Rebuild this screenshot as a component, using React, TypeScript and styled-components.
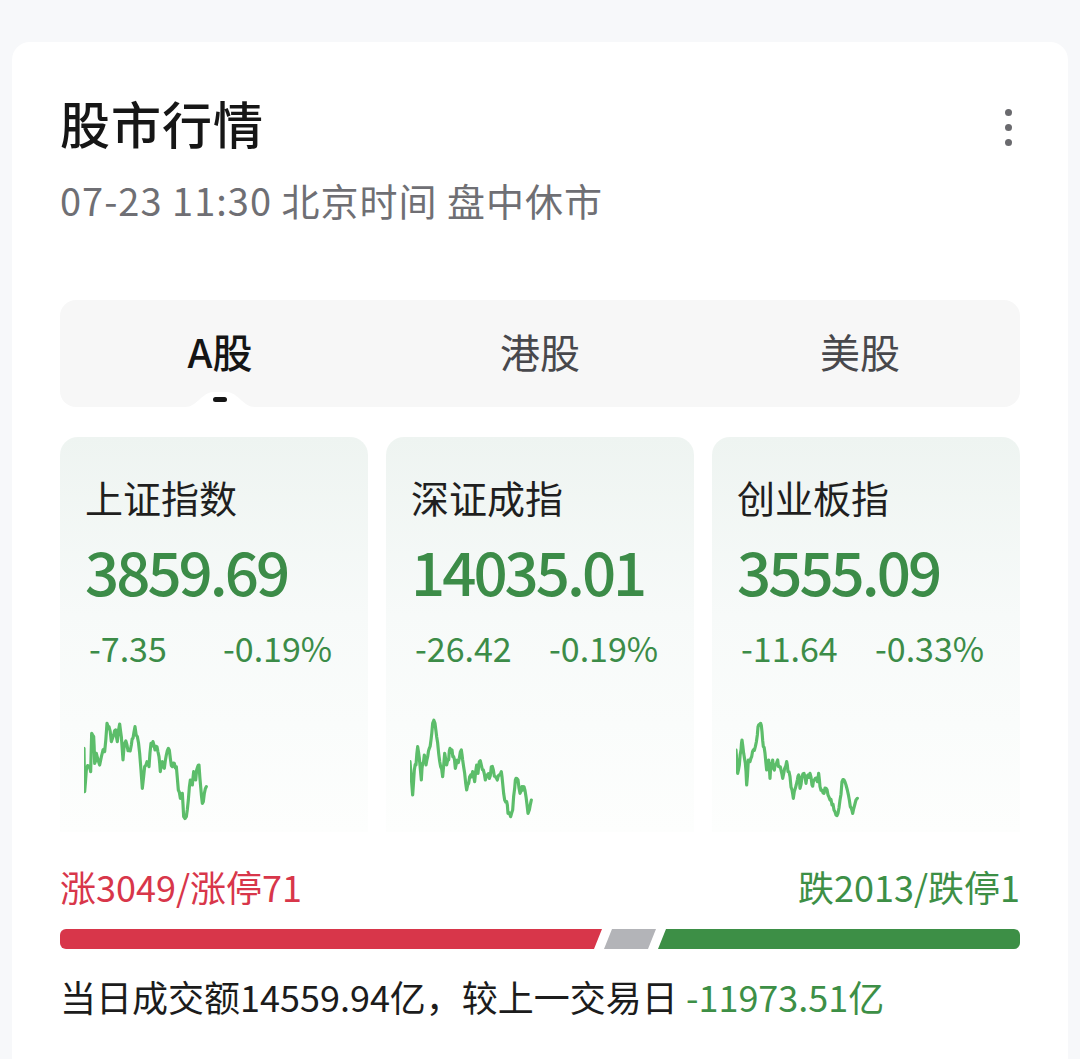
import styled, { createGlobalStyle } from 'styled-components';

const GlobalStyle = createGlobalStyle`
  body {
    margin: 0;
    background: #f7f8fa;
    font-family: 'Noto Sans CJK SC', 'Noto Sans', sans-serif;
  }
`;

type Index = {
  name: string;
  value: string;
  change: string;
  percent: string;
  start: number;
  points: number[][];
};

// traced by eye from the intraday charts, coords are in a 3x grid
const indices: Index[] = [
  {
    name: '上证指数',
    value: '3859.69',
    change: '-7.35',
    percent: '-0.19%',
    start: 43,
    points: [
      [43, 145], [45, 275], [50, 210], [58, 200], [63, 215], [66, 100], [72, 110], [75, 190],
      [80, 160], [90, 195], [100, 150], [105, 155], [112, 70], [118, 80], [125, 125], [132, 105],
      [138, 90], [143, 125], [150, 72], [155, 110], [160, 180], [165, 130], [172, 135], [178, 150],
      [185, 135], [190, 115], [196, 80], [203, 110], [210, 160], [218, 265], [225, 200], [232, 185],
      [238, 200], [244, 130], [250, 125], [256, 150], [262, 140], [268, 170], [272, 215], [278, 185],
      [284, 205], [290, 165], [296, 145], [302, 175], [308, 200], [314, 190], [320, 200], [326, 270],
      [332, 295], [338, 280], [342, 350], [350, 350], [356, 300], [362, 240], [368, 255], [372, 215],
      [378, 240], [384, 200], [388, 195], [393, 260], [398, 310], [404, 280], [410, 260],
    ],
  },
  {
    name: '深证成指',
    value: '14035.01',
    change: '-26.42',
    percent: '-0.19%',
    start: 32,
    points: [
      [32, 185], [40, 285], [45, 210], [50, 195], [55, 140], [60, 175], [66, 240], [70, 190],
      [75, 165], [80, 195], [85, 170], [90, 145], [95, 120], [100, 70], [107, 70], [112, 110],
      [118, 160], [124, 200], [130, 230], [136, 160], [142, 195], [148, 180], [152, 145], [158, 150],
      [163, 170], [168, 205], [174, 180], [180, 175], [186, 150], [190, 180], [196, 220], [202, 270],
      [208, 250], [214, 225], [220, 215], [226, 245], [232, 195], [236, 220], [240, 185], [246, 195],
      [252, 210], [258, 240], [264, 225], [270, 235], [276, 200], [282, 210], [288, 230], [294, 240],
      [300, 225], [306, 215], [310, 250], [316, 300], [322, 305], [326, 340], [334, 350], [340, 330],
      [346, 265], [350, 235], [356, 240], [362, 280], [368, 260], [374, 260], [380, 290], [386, 340],
      [390, 330], [396, 300],
    ],
  },
  {
    name: '创业板指',
    value: '3555.09',
    change: '-11.64',
    percent: '-0.33%',
    start: 50,
    points: [
      [50, 150], [55, 220], [60, 195], [65, 150], [68, 120], [73, 160], [78, 190], [82, 255],
      [87, 180], [92, 185], [97, 170], [102, 150], [108, 140], [114, 105], [118, 75], [124, 70],
      [128, 95], [132, 140], [137, 160], [142, 210], [148, 180], [152, 235], [156, 190], [160, 180],
      [165, 210], [170, 195], [175, 180], [180, 200], [186, 215], [190, 235], [196, 205], [202, 185],
      [206, 215], [212, 230], [218, 270], [222, 295], [228, 265], [234, 240], [238, 225], [242, 265],
      [248, 230], [254, 220], [260, 250], [266, 225], [272, 220], [278, 255], [282, 245], [288, 235],
      [294, 245], [298, 220], [302, 260], [308, 270], [314, 280], [320, 265], [326, 285], [332, 300],
      [338, 315], [344, 330], [350, 345], [356, 340], [362, 300], [368, 245], [374, 240], [380, 255],
      [384, 270], [390, 300], [396, 325], [400, 340], [406, 315], [414, 295],
    ],
  },
];

const tabs = ['A股', '港股', '美股'];

// add a bit of jitter between traced points so the line looks like tick data
const toPath = (points: number[][], start: number) => {
  let seed = 7;
  const rand = () => {
    seed = (seed * 9301 + 49297) % 233280;
    return seed / 233280 - 0.5;
  };
  const out: string[] = [];
  points.forEach(([x, y], i) => {
    if (i > 0) {
      const [px, py] = points[i - 1];
      const mx = (px + x) / 2;
      const my = (py + y) / 2 + rand() * 22;
      out.push(`${mx - start},${my}`);
    }
    out.push(`${x - start},${y}`);
  });
  return 'M' + out.join(' L');
};

const App = () => {
  return (
    <>
      <GlobalStyle />
      <Page>
        <Panel>
          <Header>
            <div>
              <Title>股市行情</Title>
              <Subtitle>07-23 11:30 北京时间 盘中休市</Subtitle>
            </div>
            <MoreButton aria-label='更多'>
              <span />
              <span />
              <span />
            </MoreButton>
          </Header>

          <TabBar>
            {tabs.map((t, i) => (
              <Tab key={t} $active={i === 0}>
                {t}
                {i === 0 && (
                  <Notch>
                    <svg width='70' height='15' viewBox='0 0 70 15'>
                      <path d='M0 15 C12 15 16 1 28 0 L42 0 C54 1 58 15 70 15 Z' fill='#fff' />
                    </svg>
                    <Indicator />
                  </Notch>
                )}
              </Tab>
            ))}
          </TabBar>

          <CardGrid>
            {indices.map((idx) => (
              <IndexCard key={idx.name}>
                <IndexName>{idx.name}</IndexName>
                <IndexValue>{idx.value}</IndexValue>
                <ChangeRow>
                  <span>{idx.change}</span>
                  <span>{idx.percent}</span>
                </ChangeRow>
                <Spark width='160' height='130' viewBox='0 0 480 390'>
                  <path
                    d={toPath(idx.points, idx.start)}
                    fill='none'
                    stroke='#5cbd6a'
                    strokeWidth='9.5'
                    strokeLinejoin='round'
                    strokeLinecap='round'
                  />
                </Spark>
              </IndexCard>
            ))}
          </CardGrid>

          <StatsRow>
            <Stat $color='#d8364a'>涨3049/涨停71</Stat>
            <Stat $color='#3d8f46'>跌2013/跌停1</Stat>
          </StatsRow>

          <Breadth>
            <Segment $kind='up' $grow={542} />
            <Segment $kind='flat' $grow={52} />
            <Segment $kind='down' $grow={362} />
          </Breadth>

          <Turnover>
            当日成交额14559.94亿，较上一交易日 <Diff>-11973.51亿</Diff>
          </Turnover>
        </Panel>
      </Page>
    </>
  );
};

export default App;

const Page = styled.div`
  padding: 42px 12px 0;
`;

const Panel = styled.div`
  background: #fff;
  border-radius: 18px 18px 0 0;
  padding: 48px 48px 40px;
  min-height: 1017px;
  box-sizing: border-box;
`;

const Header = styled.div`
  display: flex;
  justify-content: space-between;
  align-items: flex-start;
`;

const Title = styled.h1`
  margin: 0;
  font-size: 50px;
  line-height: 64px;
  letter-spacing: 1px;
  font-weight: 500;
  color: #161616;
`;

const Subtitle = styled.div`
  margin-top: 22px;
  font-size: 38px;
  line-height: 48px;
  letter-spacing: 1px;
  color: #6f6f74;
`;

const MoreButton = styled.button`
  display: flex;
  flex-direction: column;
  gap: 8px;
  margin: 19px 8px 0 0;
  padding: 0;
  border: 0;
  background: none;

  span {
    width: 7px;
    height: 7px;
    border-radius: 50%;
    background: #6a6a6e;
  }
`;

const TabBar = styled.div`
  display: grid;
  grid-template-columns: repeat(3, 1fr);
  margin-top: 76px;
  height: 107px;
  background: #f7f7f7;
  border-radius: 16px;
`;

const Tab = styled.div<{ $active?: boolean }>`
  position: relative;
  display: flex;
  justify-content: center;
  padding-top: 23px;
  font-size: 40px;
  line-height: 56px;
  color: ${(p) => (p.$active ? '#151515' : '#48484c')};
  font-weight: ${(p) => (p.$active ? 500 : 400)};
`;

const Notch = styled.div`
  position: absolute;
  bottom: 0;
  left: 50%;
  width: 70px;
  height: 15px;
  transform: translateX(-50%);

  svg {
    display: block;
  }
`;

const Indicator = styled.div`
  position: absolute;
  top: 5px;
  left: 28px;
  width: 14px;
  height: 5px;
  border-radius: 3px;
  background: #151515;
`;

const CardGrid = styled.div`
  display: grid;
  grid-template-columns: repeat(3, 1fr);
  gap: 18px;
  margin-top: 30px;
`;

const IndexCard = styled.div`
  height: 395px;
  padding: 36px 24px 0 25px;
  box-sizing: border-box;
  border-radius: 18px 18px 0 0;
  background: linear-gradient(180deg, #eef4f1 0%, #f7faf9 45%, #fdfefd 100%);
  overflow: hidden;
`;

const IndexName = styled.div`
  font-size: 38px;
  line-height: 48px;
  color: #1f1f1f;
`;

const IndexValue = styled.div`
  margin-top: 16px;
  font-size: 60px;
  line-height: 66px;
  letter-spacing: -3px;
  font-weight: 500;
  color: #3c8c48;
`;

const ChangeRow = styled.div`
  display: grid;
  grid-template-columns: 134px auto;
  margin-top: 23px;
  padding-left: 4px;
  font-size: 34px;
  line-height: 44px;
  color: #3c8c48;
`;

const Spark = styled.svg`
  display: block;
  margin-top: 30px;
  margin-left: -1px;
`;

const StatsRow = styled.div`
  display: flex;
  justify-content: space-between;
  margin-top: 30px;
`;

const Stat = styled.span<{ $color: string }>`
  font-size: 36px;
  line-height: 48px;
  color: ${(p) => p.$color};
`;

const segmentStyle = {
  up: {
    bg: '#d8364a',
    clip: 'polygon(0 0, 100% 0, calc(100% - 8px) 100%, 0 100%)',
    radius: '6px 0 0 6px',
  },
  flat: {
    bg: '#b3b4b8',
    clip: 'polygon(8px 0, 100% 0, calc(100% - 8px) 100%, 0 100%)',
    radius: '0',
  },
  down: {
    bg: '#3d8f46',
    clip: 'polygon(8px 0, 100% 0, 100% 100%, 0 100%)',
    radius: '0 6px 6px 0',
  },
};

const Breadth = styled.div`
  display: flex;
  gap: 2px;
  height: 20px;
  margin-top: 19px;
`;

const Segment = styled.div<{ $kind: 'up' | 'flat' | 'down'; $grow: number }>`
  flex: ${(p) => p.$grow} 1 0;
  background: ${(p) => segmentStyle[p.$kind].bg};
  clip-path: ${(p) => segmentStyle[p.$kind].clip};
  border-radius: ${(p) => segmentStyle[p.$kind].radius};
`;

const Turnover = styled.div`
  margin-top: 23px;
  font-size: 36px;
  line-height: 48px;
  color: #1c1c1c;
`;

const Diff = styled.span`
  color: #3d8f46;
`;
